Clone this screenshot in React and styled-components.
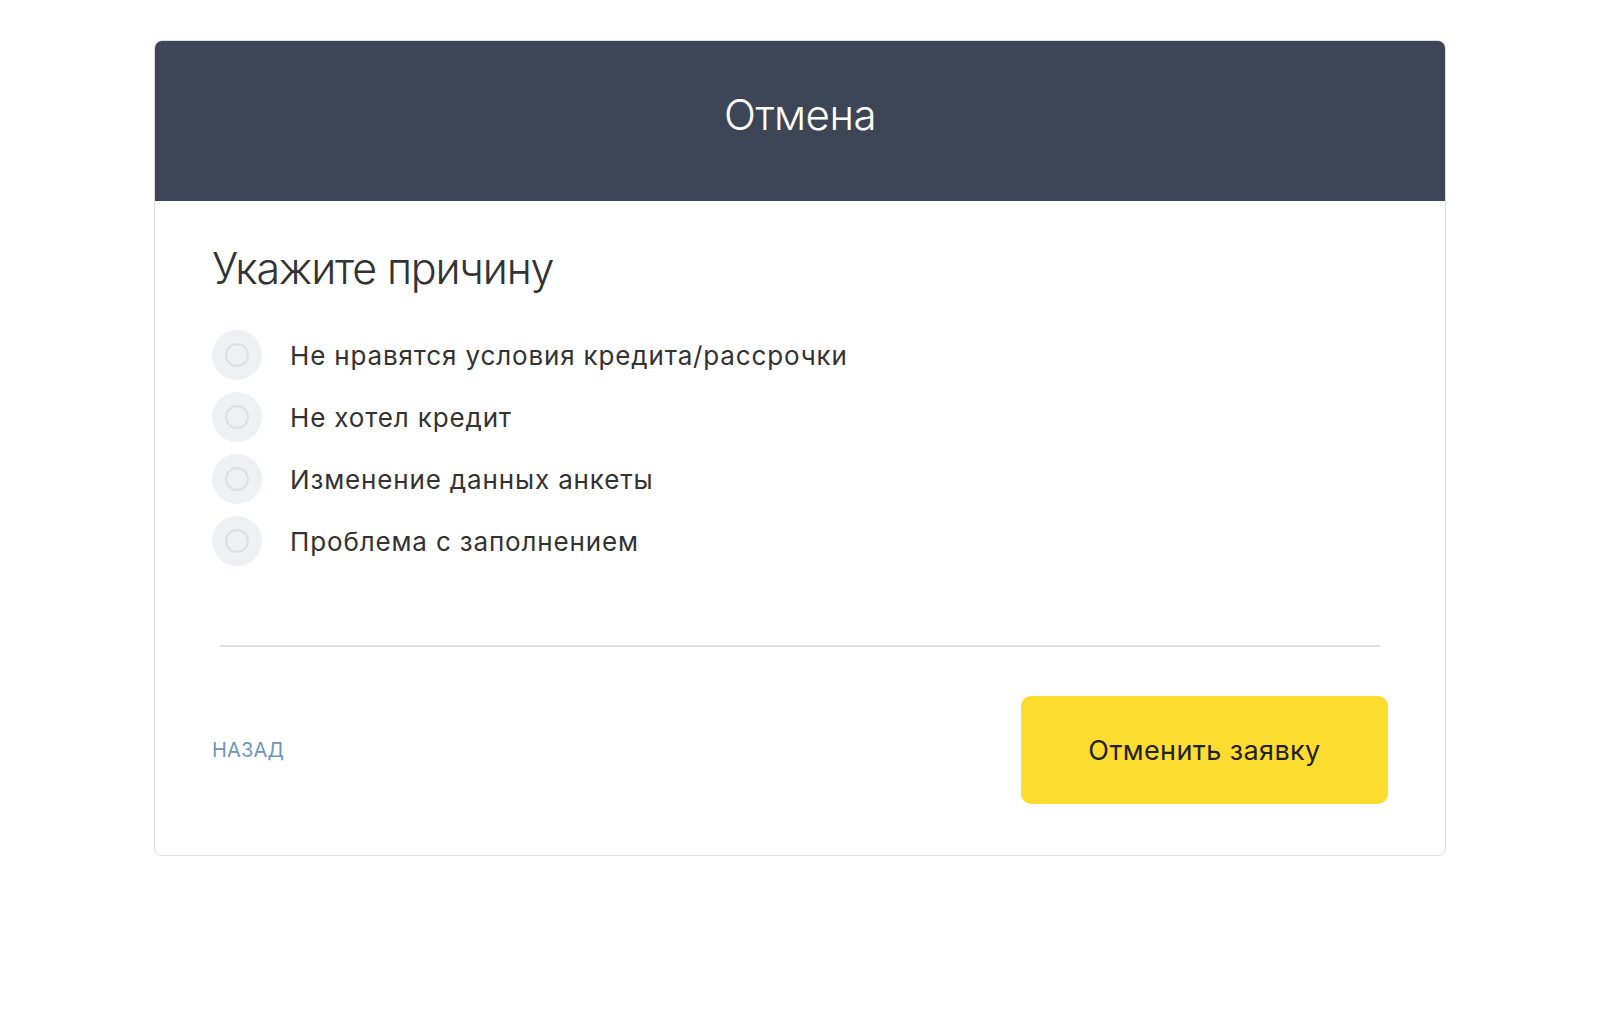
import React, { useState } from "react";
import styled, { createGlobalStyle } from "styled-components";

const GlobalStyle = createGlobalStyle`
  html, body {
    margin: 0;
    padding: 0;
    background: #ffffff;
    font-family: Inter, "Noto Sans", "Liberation Sans", sans-serif;
  }
`;

const Page = styled.div`
  width: 1600px;
  height: 1020px;
  padding-top: 40px;
  padding-left: 154px;
  box-sizing: border-box;
`;

const Card = styled.div`
  width: 1292px;
  height: 816px;
  box-sizing: border-box;
  border: 1px solid #dcdde0;
  border-radius: 8px;
  overflow: hidden;
  display: flex;
  flex-direction: column;
`;

const Header = styled.div`
  height: 160px;
  background-color: #3d4656;
  display: flex;
  align-items: center;
  justify-content: center;
  flex-shrink: 0;
  padding-bottom: 13px;
  box-sizing: border-box;
`;

const Title = styled.h1`
  margin: 0;
  color: #ffffff;
  font-weight: 300;
  font-size: 42px;
  letter-spacing: -0.5px;
`;

const Body = styled.div`
  flex: 1;
  padding: 39px 57px 0 57px;
  display: flex;
  flex-direction: column;
`;

const Subtitle = styled.h2`
  margin: 0 0 34px 0;
  font-weight: 300;
  font-size: 43px;
  line-height: 56px;
  color: #333333;
  letter-spacing: -1.2px;
`;

const List = styled.div`
  display: flex;
  flex-direction: column;
  gap: 12px;
`;

const Option = styled.label`
  display: flex;
  align-items: center;
  gap: 28px;
  cursor: pointer;
  height: 50px;
`;

const RadioOuter = styled.span`
  width: 50px;
  height: 50px;
  border-radius: 50%;
  background: #eef0f4;
  display: flex;
  align-items: center;
  justify-content: center;
  flex-shrink: 0;
`;

const RadioInner = styled.span`
  width: 20px;
  height: 20px;
  border-radius: 50%;
  border: 2px solid ${(p) => (p.$checked ? "#3d4656" : "#dcdfe4")};
  background: ${(p) => (p.$checked ? "#3d4656" : "transparent")};
`;

const OptionText = styled.span`
  font-size: 26px;
  color: #333333;
  letter-spacing: 0.85px;
`;

const Divider = styled.div`
  height: 2px;
  background: #e0e0e0;
  margin: 79px 8px 0 8px;
`;

const Footer = styled.div`
  display: flex;
  justify-content: space-between;
  align-items: center;
  margin-top: 49px;
`;

const BackLink = styled.a`
  color: #6e95b8;
  font-size: 20px;
  text-decoration: none;
  letter-spacing: 0.2px;
  cursor: pointer;
`;

const CancelButton = styled.button`
  width: 367px;
  height: 108px;
  border: none;
  border-radius: 10px;
  background: #fcdd2f;
  color: #222222;
  font-family: inherit;
  font-size: 27px;
  letter-spacing: 0.4px;
  cursor: pointer;
`;

const reasons = [
  "Не нравятся условия кредита/рассрочки",
  "Не хотел кредит",
  "Изменение данных анкеты",
  "Проблема с заполнением",
];

export default function App() {
  const [selected, setSelected] = useState(null);

  return (
    <>
      <GlobalStyle />
      <Page>
        <Card>
          <Header>
            <Title>Отмена</Title>
          </Header>
          <Body>
            <Subtitle>Укажите причину</Subtitle>
            <List>
              {reasons.map((r, i) => (
                <Option key={r} onClick={() => setSelected(i)}>
                  <RadioOuter>
                    <RadioInner $checked={selected === i} />
                  </RadioOuter>
                  <OptionText>{r}</OptionText>
                </Option>
              ))}
            </List>
            <Divider />
            <Footer>
              <BackLink>НАЗАД</BackLink>
              <CancelButton>Отменить заявку</CancelButton>
            </Footer>
          </Body>
        </Card>
      </Page>
    </>
  );
}
